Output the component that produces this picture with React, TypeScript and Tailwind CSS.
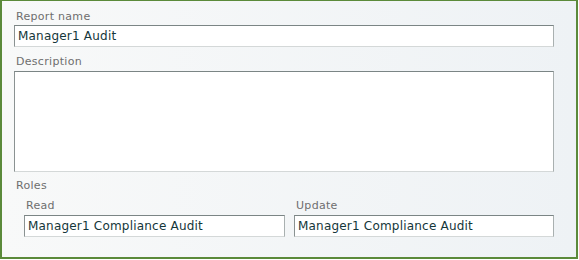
import React from "react";

const font = "font-['DejaVu_Sans',sans-serif]";

function Label({ text, className = "" }: { text: string; className?: string }) {
  return (
    <div className={`text-[11px] leading-[13px] tracking-[0.3px] text-[#6e6e6e] ${className}`}>
      {text}
    </div>
  );
}

function Field({ value, className = "" }: { value: string; className?: string }) {
  return (
    <div
      className={`h-[22px] border border-t-[#7b8585] border-l-[#8a9292] border-r-[#a9b0b0] border-b-[#d4d8d8] bg-white pl-[3px] text-[12px] leading-[20px] tracking-[0.2px] text-[#14363a] ${className}`}
    >
      {value}
    </div>
  );
}

export default function App() {
  return (
    <div className={`h-[260px] w-[579px] bg-white ${font}`}>
      <div className="flex h-[259px] w-[578px] flex-col border-b-2 border-l-2 border-r-2 border-t border-[#5b8a3a] bg-gradient-to-r from-[#f8f9f9] to-[#eef2f5] pl-[12px] pr-[22px]">
        {/* Report name */}
        <Label text="Report name" className="ml-[2px] mt-[9px]" />
        <Field value="Manager1 Audit" className="mt-[2px]" />

        {/* Description */}
        <Label text="Description" className="ml-[2px] mt-[8px]" />
        <div className="mt-[3px] h-[101px] border border-t-[#7b8585] border-l-[#8a9292] border-r-[#a9b0b0] border-b-[#d4d8d8] bg-white" />

        {/* Roles */}
        <Label text="Roles" className="ml-[2px] mt-[7px]" />
        <div className="ml-[10px] mt-[7px] grid grid-cols-[261px_1fr] gap-x-[9px]">
          <div>
            <Label text="Read" className="ml-[2px]" />
            <Field value="Manager1 Compliance Audit" className="mt-[3px]" />
          </div>
          <div>
            <Label text="Update" className="ml-[2px]" />
            <Field value="Manager1 Compliance Audit" className="mt-[3px]" />
          </div>
        </div>
      </div>
    </div>
  );
}
